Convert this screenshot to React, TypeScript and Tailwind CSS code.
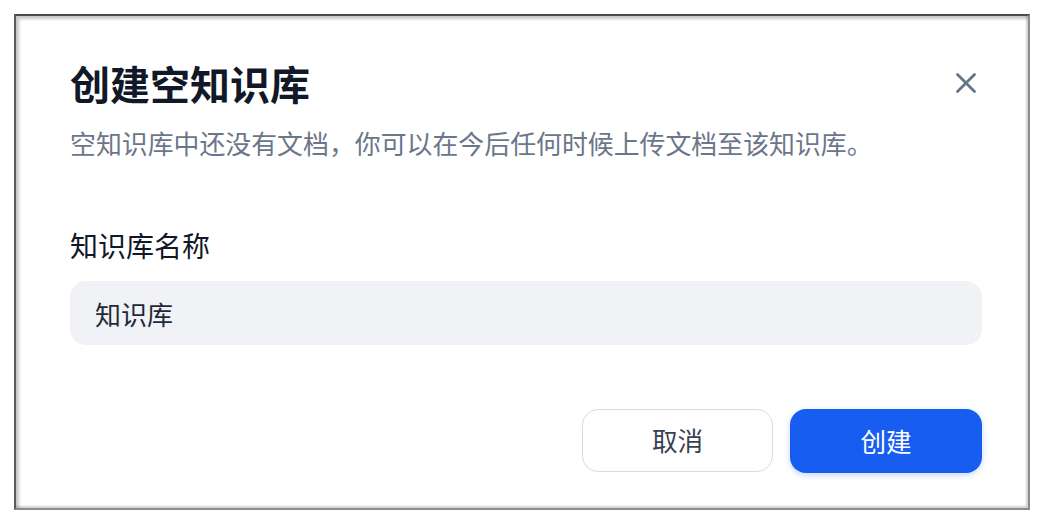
import React from "react";

export default function App() {
  return (
    <div
      className="w-[1044px] h-[525px] bg-white pt-[14px] pl-[14px]"
      style={{ fontFamily: '"Noto Sans CJK SC", "Noto Sans", sans-serif' }}
    >
      <div className="w-[1016px] h-[496px] bg-white border-2 border-t-[#4b4b4b] border-l-[#5a5a5a] border-r-[#8c8c8c] border-b-[#8c8c8c] shadow-[inset_3px_3px_3px_rgba(0,0,0,0.22),inset_-2px_-2px_2px_rgba(0,0,0,0.18)] pt-[43px] pl-[54px] pr-[46px] flex flex-col">
        <div className="flex items-center justify-between h-[48px]">
          <h1 className="text-[40px] leading-[48px] font-bold text-[#111827]">
            创建空知识库
          </h1>
          <button className="w-[32px] h-[32px] flex items-center justify-center text-[#64748b]">
            <svg width="22" height="22" viewBox="0 0 22 22" fill="none">
              <path
                d="M2.5 2.5 L19.5 19.5 M19.5 2.5 L2.5 19.5"
                stroke="currentColor"
                strokeWidth="2.8"
                strokeLinecap="round"
              />
            </svg>
          </button>
        </div>
        <p className="mt-[19px] text-[25.9px] leading-[34px] text-[#6b7689]">
          空知识库中还没有文档，你可以在今后任何时候上传文档至该知识库。
        </p>
        <label className="mt-[67px] text-[28px] leading-[36px] text-[#111827]">
          知识库名称
        </label>
        <div className="mt-[18px] h-[64px] rounded-[16px] bg-[#f1f2f6] flex items-center pl-[25px] text-[26px] text-[#1f2937]">
          知识库
        </div>
        <div className="mt-[64px] flex justify-end gap-[17px]">
          <button className="w-[191px] h-[63px] rounded-[16px] border border-[#dcdcdf] bg-white text-[25.6px] text-[#374151] flex items-center justify-center">
            取消
          </button>
          <button className="w-[192px] h-[64px] rounded-[16px] bg-[#165df0] text-white text-[25.6px] flex items-center justify-center shadow-[0_2px_6px_rgba(22,93,240,0.25)]">
            创建
          </button>
        </div>
      </div>
    </div>
  );
}
